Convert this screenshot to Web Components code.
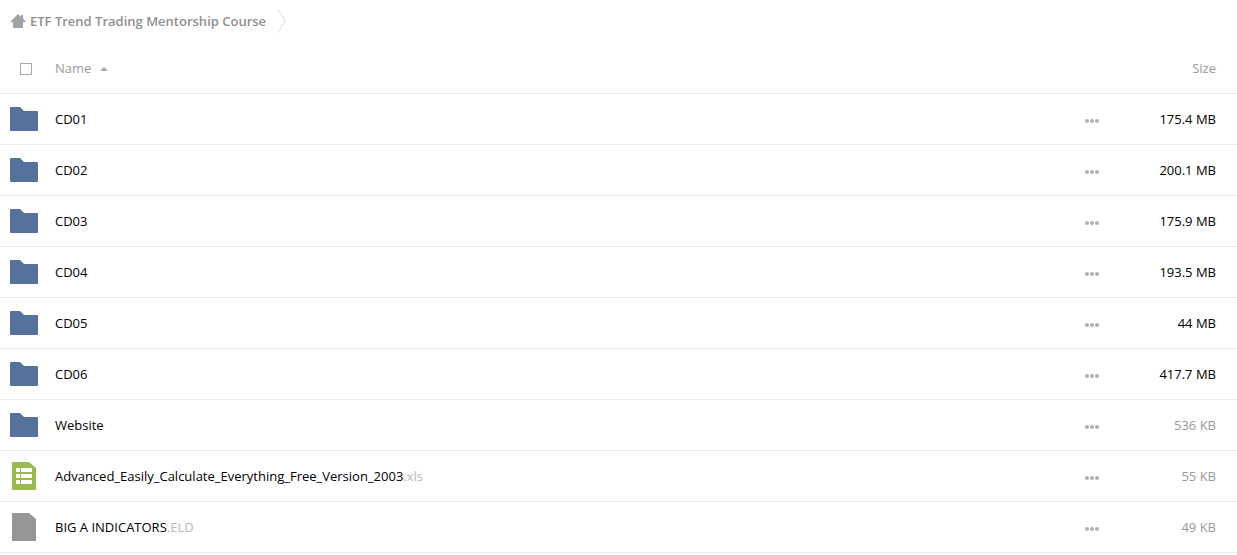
<!DOCTYPE html>
<html lang="en">
<head>
<meta charset="utf-8">
<title>ETF Trend Trading Mentorship Course</title>
<style>
  body { margin: 0; background: #fff; color: #000; font: 13px/18px "Open Sans", sans-serif; }
</style>
</head>
<body>
<file-browser>
  <path-bar slot="path">ETF Trend Trading Mentorship Course</path-bar>
  <file-table></file-table>
</file-browser>

<template id="file-browser">
  <style>
    :host { display: flex; flex-direction: column; }
  </style>
  <header><slot name="path"></slot></header>
  <main><slot></slot></main>
</template>

<template id="path-bar">
  <style>
    :host { display: block; }
    nav { display: flex; align-items: center; gap: 11px; height: 43px; padding: 0 0 1px 10px; box-sizing: border-box; }
    a { display: flex; align-items: center; gap: 4px; color: #8f8f8f; font-weight: 600; text-decoration: none; }
    svg { display: block; flex: none; }
  </style>
  <nav aria-label="Folder path">
    <a href="#">
      <svg width="16" height="14" viewBox="0 0 16 14" fill="#a3a3a3" aria-hidden="true"><path d="M8 0l3 2.700V1h2v3.600L16 8h-3v6H3V8H0z"/></svg>
      <slot></slot>
    </a>
    <svg width="9" height="24" viewBox="0 0 9 24" fill="none" stroke="#dedede" aria-hidden="true"><path d="M.5 0L8.300 12L.5 24"/></svg>
  </nav>
</template>

<template id="file-icon">
  <style>
    :host { display: block; }
    svg { display: none; margin: 0 auto; }
    :host([kind="folder"]) .folder, :host([kind="sheet"]) .sheet, :host([kind="file"]) .file { display: block; }
  </style>
  <svg class="folder" width="28" height="24" viewBox="0 0 28 24" fill="#54729b" aria-hidden="true"><path d="M1 0h9l4 4h13a1 1 0 0 1 1 1v18a1 1 0 0 1-1 1H1a1 1 0 0 1-1-1V1a1 1 0 0 1 1-1z"/></svg>
  <svg class="sheet" width="24" height="28" viewBox="0 0 24 28" aria-hidden="true"><path fill="#9aba4b" d="M1 0h16l7 6v21a1 1 0 0 1-1 1H1a1 1 0 0 1-1-1V1a1 1 0 0 1 1-1z"/><path fill="#fff" d="M4 6h4v4H4zM9 6h11v4H9zM4 12h4v4H4zM9 12h11v4H9zM4 18h4v4H4zM9 18h11v4H9z"/></svg>
  <svg class="file" width="24" height="28" viewBox="0 0 24 28" fill="#969696" aria-hidden="true"><path d="M1 0h16l7 6v21a1 1 0 0 1-1 1H1a1 1 0 0 1-1-1V1a1 1 0 0 1 1-1z"/></svg>
</template>

<template id="more-button">
  <style>
    :host { display: block; }
    button { display: block; margin: 0; padding: 0; border: 0; background: none; cursor: pointer; }
    svg { display: block; }
  </style>
  <button type="button" aria-label="More actions">
    <svg width="14" height="8" viewBox="0 0 14 8" fill="#b0b0b0" aria-hidden="true"><circle cx="2" cy="6" r="2"/><circle cx="7" cy="6" r="2"/><circle cx="12" cy="6" r="2"/></svg>
  </button>
</template>

<template id="file-table">
  <style>
    :host { display: block; }
    table { width: 100%; table-layout: fixed; border-collapse: separate; border-spacing: 0; }
    th, td { height: 50px; padding: 0; border-bottom: 1px solid #ebebeb; font-weight: 400; text-align: left; vertical-align: middle; }
    th { color: #999; }
    .mark { width: 48px; }
    .name { padding-left: 7px; }
    .more { width: 32px; }
    .size { width: 99px; padding-right: 21px; text-align: right; }
    file-icon { width: 28px; margin-left: 10px; }
    input { appearance: none; display: block; width: 12px; height: 12px; margin: 2px 0 0 20px; border: 1px solid #aaa; background: #fff; box-sizing: border-box; }
    input:checked { background: #54729b; }
    .sort { display: flex; align-items: center; gap: 9px; padding: 0; border: 0; background: none; color: inherit; font: inherit; cursor: pointer; }
    .sort svg { display: block; padding-top: 2px; }
    .ext { color: #bbb; }
    .small { color: #999; }
  </style>
  <table>
    <thead>
      <tr>
        <th class="mark"><input type="checkbox" aria-label="Select all"></th>
        <th class="name" aria-sort="ascending"><button class="sort" type="button">Name<svg width="8" height="4" viewBox="0 0 8 4" fill="#aaa" aria-hidden="true"><path d="M0 4l4-4 4 4z"/></svg></button></th>
        <th class="more"></th>
        <th class="size">Size</th>
      </tr>
    </thead>
    <tbody></tbody>
  </table>
</template>

<script>
  class TemplateElement extends HTMLElement {
    constructor() {
      super();
      const template = document.getElementById(this.localName);
      this.attachShadow({ mode: "open" }).append(template.content.cloneNode(true));
    }
  }

  class FileBrowser extends TemplateElement {}
  class PathBar extends TemplateElement {}
  class FileIcon extends TemplateElement {}
  class MoreButton extends TemplateElement {}

  const files = [
    ["folder", "CD01", "", "175.4 MB"],
    ["folder", "CD02", "", "200.1 MB"],
    ["folder", "CD03", "", "175.9 MB"],
    ["folder", "CD04", "", "193.5 MB"],
    ["folder", "CD05", "", "44 MB"],
    ["folder", "CD06", "", "417.7 MB"],
    ["folder", "Website", "", "536 KB"],
    ["sheet", "Advanced_Easily_Calculate_Everything_Free_Version_2003", ".xls", "55 KB"],
    ["file", "BIG A INDICATORS", ".ELD", "49 KB"]
  ];

  class FileTable extends TemplateElement {
    constructor() {
      super();
      this.shadowRoot.querySelector("tbody").innerHTML = files.map(([kind, name, ext, size]) => `
        <tr>
          <td class="mark"><file-icon kind="${kind}"></file-icon></td>
          <td class="name">${name}${ext && `<span class="ext">${ext}</span>`}</td>
          <td class="more"><more-button></more-button></td>
          <td class="size${size.endsWith("KB") ? " small" : ""}">${size}</td>
        </tr>`).join("");
    }
  }

  customElements.define("file-icon", FileIcon);
  customElements.define("more-button", MoreButton);
  customElements.define("path-bar", PathBar);
  customElements.define("file-table", FileTable);
  customElements.define("file-browser", FileBrowser);
</script>
</body>
</html>
